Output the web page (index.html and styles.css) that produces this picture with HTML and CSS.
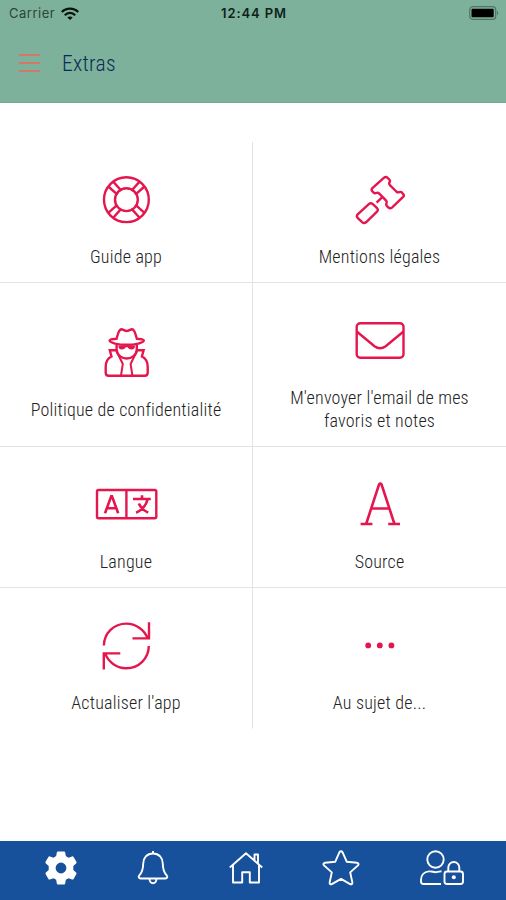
FILE: index.html
```
<!DOCTYPE html>
<html lang="fr">
<head>
    <meta charset="UTF-8">
    <meta name="viewport" content="width=device-width, initial-scale=1.0">
    <title>Extras</title>
    <link rel="stylesheet" href="styles.css">
</head>
<body>
    <header class="header">
        <div class="status-bar">
            <div class="carrier">
                <span>Carrier</span>
                <svg class="wifi" viewBox="0 0 18 13" fill="none" stroke="#07130e" stroke-width="2.3">
                    <path d="M.8 5C5.3.4 12.7.4 17.2 5M3.8 8.2c2.9-3 7.5-3 10.4 0"/>
                    <path d="M6.3 10.6c1.5-1.6 3.9-1.6 5.4 0L9 13z" fill="#07130e" stroke="none"/>
                </svg>
            </div>
            <span class="time">12:44 PM</span>
            <svg class="battery" viewBox="0 0 30 14">
                <rect x=".7" y=".7" width="26" height="12.6" rx="3" fill="none" stroke="#4f7563" stroke-width="1.2"/>
                <rect x="2.5" y="2.8" width="22.2" height="8.4" rx="1" fill="#000"/>
                <path d="M28 4.8c1.6.8 1.6 3.6 0 4.4z" fill="#4f7563"/>
            </svg>
        </div>
        <div class="title-bar">
            <button class="menu-btn" aria-label="Menu">
                <span></span>
                <span></span>
                <span></span>
            </button>
            <h1>Extras</h1>
        </div>
    </header>

    <main class="grid">
        <a class="tile">
            <svg class="icon" viewBox="0 0 64 50">
                <circle cx="32.4" cy="24.7" r="22.4"/>
                <circle cx="32.4" cy="24.7" r="11.4"/>
                <path d="M14.3 11.5l9.2 8.2M19.2 6.6l8.2 9.2M50.5 11.5l-9.2 8.2M45.6 6.6l-8.2 9.2M14.3 37.9l9.2-8.2M19.2 42.8l8.2-9.2M50.5 37.9l-9.2-8.2M45.6 42.8l-8.2-9.2"/>
            </svg>
            <span class="label">Guide app</span>
        </a>
        <a class="tile">
            <svg class="icon" viewBox="0 0 64 50">
                <path d="M35.8 2.8q2-1.7 3.8 0l1.7 1.7q1.2 1.4.2 2.8-.8 1.6.6 3l6.2 6.2q1.4 1.3 3 .6 1.6-.6 2.8.6l1 1.2q1.4 1.5 0 3L44.2 32.3q-2 1.8-3.8.2l-1.2-1.2q-1.5-1.5-.7-3.1.6-1.6-.6-2.8l-6.8-6.9q-1.4-1.2-2.8-.5-1.6.7-2.9-.6l-1.1-1.2q-1.4-1.6.1-3.2z"/>
                <path d="M34 22.4l-5.4 5.3M20.8 29.2q2-1.9 4-.1l4.3 4.1q1.6 1.7-.1 3.5L18.3 47q-2.2 1.9-4.2.1l-4.5-4.3q-1.5-1.7.1-3.4z"/>
            </svg>
            <span class="label">Mentions légales</span>
        </a>
        <a class="tile">
            <svg class="icon" viewBox="0 0 64 50">
                <path d="M22.5 10.8C23.8 7 24.5 1.5 27.3 1.3c2 0 3.3 1.7 5.4 1.7s3.4-1.7 5.4-1.7c2.8.2 3.5 5.7 4.8 9.5 3.3.3 6.900.1 6.900 1.800 0 2.300-8.800 4.200-17.100 4.200S15.600 14.900 15.600 12.600c0-1.700 3.600-1.500 6.900-1.800z"/>
                <path d="M22.6 16.5v5c0 5.5 5.5 9 10.1 9s10.1-3.5 10.1-9v-5"/>
                <path d="M24.5 17.500h16.400c.3 2.700-1 4-3.300 4s-3.400-1-3.900-2.200h-2c-.5 1.200-1.600 2.200-3.900 2.200s-3.600-1.300-3.300-4z" fill="#e5164e" stroke="none"/>
                <path d="M22.3 22.3h-6.500l1.700 6.200c-4.400 2-5.800 6.500-5.800 10.500v5.800q0 3 3 3h36q3 0 3-3V39c0-4-1.400-8.500-5.800-10.500l1.700-6.200h-6.500"/>
                <path d="M22.5 23l6.300 13-1.800 11.500M42.900 23l-6.300 13 1.800 11.500" stroke-width="2"/>
            </svg>
            <span class="label">Politique de confidentialité</span>
        </a>
        <a class="tile">
            <svg class="icon" viewBox="0 0 64 50">
                <rect x="8.7" y="7.2" width="46.8" height="34.6" rx="3.5"/>
                <path d="M8.7 15.5l17.8 14.7q5.6 4 11.2 0l17.8-14.7"/>
            </svg>
            <span class="label">M'envoyer l'email de mes favoris et notes</span>
        </a>
        <a class="tile">
            <svg class="icon" viewBox="0 0 64 50">
                <rect x="3" y="10" width="59.3" height="28.2" rx="1.5"/>
                <path d="M32.4 10v28.2"/>
                <path d="M11 33.3l6.2-17h.8l6.2 17M13.3 28.2h8.6M39 19h17.800M48 15.200V19M53.500 19.500c-1.500 6-5.500 10.500-11.400 13.200M44.800 23.500c1.800 4.200 4.800 7 9.400 9.200" stroke-width="2.6"/>
            </svg>
            <span class="label">Langue</span>
        </a>
        <a class="tile">
            <svg class="icon" viewBox="0 0 64 50">
                <path d="M12.6 44h11.800M40.200 44h11.800M18.300 43.500L31 4.500q1.300-1.800 2.600 0l12.700 39M23.300 28.500h18" stroke-width="2.6"/>
            </svg>
            <span class="label">Source</span>
        </a>
        <a class="tile">
            <svg class="icon" viewBox="0 0 64 50">
                <path d="M9.9 24.5C10 12 20 2.600 32.300 2.600c9.500 0 18 6 21.200 14.500M55 1.200v16.200H38.500M54.800 25c-.1 12.500-10.100 22.200-22.400 22.200-9.500 0-18-6-21.200-14.500M9.800 48.600V32.400h16.500"/>
            </svg>
            <span class="label">Actualiser l'app</span>
        </a>
        <a class="tile">
            <svg class="icon icon-dots" viewBox="0 0 64 50">
                <circle cx="20.2" cy="24.4" r="2.9"/>
                <circle cx="31.8" cy="24.4" r="2.9"/>
                <circle cx="43.4" cy="24.4" r="2.9"/>
            </svg>
            <span class="label">Au sujet de...</span>
        </a>
    </main>

    <nav class="tab-bar">
        <svg class="tab-gear" viewBox="0 0 34 36">
            <path fill-rule="evenodd" d="M14 1.500h6q1 0 1.200 1l.6 3.600 2.700 1.600 3.500-1.300q1-.4 1.600.6l2.800 4.800q.5 1-.3 1.700L29.300 16v4l2.800 2.400q.8.700.3 1.700l-2.800 4.900q-.6.900-1.600.5l-3.500-1.300-2.700 1.600-.6 3.600q-.2 1.100-1.200 1.100h-6q-1 0-1.200-1.100l-.6-3.600-2.700-1.600L6 29.500q-1 .4-1.600-.5l-2.800-4.900q-.5-1 .3-1.700L4.700 20v-4l-2.800-2.500q-.8-.7-.3-1.700L4.400 7Q5 6 6 6.400l3.500 1.300 2.700-1.600.6-3.600q.2-1 1.200-1zM17 12.600a5.400 5.400 0 100 10.800 5.400 5.400 0 000-10.800z"/>
        </svg>
        <svg class="tab-bell" viewBox="0 0 32 36">
            <path d="M16 1v2.500M16 3.500c-6 0-9.800 4.500-9.800 10.200 0 6.300-1.200 8.700-3.900 11.600-1.200 1.400-.5 3.200 1.300 3.200h24.800c1.800 0 2.500-1.800 1.300-3.200-2.700-2.900-3.900-5.300-3.900-11.600C25.800 8 22 3.500 16 3.500zM12.500 29c.2 2.500 1.600 4.200 3.500 4.200s3.300-1.700 3.500-4.200"/>
        </svg>
        <svg class="tab-home" viewBox="0 0 36 36">
            <path d="M1.800 17.500L18 3.200l16.200 14.300M5 15v17.500h9.200V22.200h7.600v10.300H31V15M26.500 10V4.500H30v8.800"/>
        </svg>
        <svg class="tab-star" viewBox="0 0 38 36">
            <path d="M17.500 2.200q1.500-1.900 3 0l4.200 9.500 10.400 1.100q2.400.6.900 2.600l-7.800 7 2.200 10.200q0 2.300-2.300 1.500L19 28.900l-9.100 5.200q-2.300.8-2.300-1.500l2.200-10.200-7.800-7q-1.500-2 .9-2.600l10.400-1.100z"/>
        </svg>
        <svg class="tab-user" viewBox="0 0 46 36">
            <circle cx="16.500" cy="9.500" r="8.200"/>
            <path d="M22.500 21.500c-2.500-.5-4 .7-6 .7-2.200 0-3.700-1.200-6.700-.8-4.800.5-7.800 4-7.800 8.600v1.500q0 2.500 2.500 2.500H22"/>
            <rect x="25.500" y="21.500" width="18.500" height="12.500" rx="2.500"/>
            <path d="M29.300 21v-3.500a5.500 5.500 0 0111 0V21"/>
            <circle class="keyhole" cx="34.800" cy="27.300" r="2"/>
        </svg>
    </nav>
</body>
</html>
```
FILE: styles.css
```
* {
    margin: 0;
    padding: 0;
    box-sizing: border-box;
}

body {
    font-family: 'Roboto Condensed', Roboto, sans-serif;
    font-stretch: 75%;
    background-color: #fff;
    color: #222;
    display: flex;
    flex-direction: column;
    height: 900px;
}

.header {
    height: 103px;
    background-color: #7db19b;
    border-bottom: 1px solid #72aa91;
}

.status-bar {
    display: grid;
    grid-template-columns: 1fr auto 1fr;
    align-items: center;
    height: 26px;
    padding: 0 7px 0 9px;
    font-family: Inter, sans-serif;
    font-stretch: 100%;
    font-size: 13px;
    color: #2c4539;
}

.carrier {
    display: flex;
    align-items: center;
    gap: 6px;
    letter-spacing: 0.5px;
}

.wifi {
    width: 18px;
    height: 13px;
}

.time {
    font-weight: 600;
    letter-spacing: 0.9px;
    color: #10231a;
}

.battery {
    width: 30px;
    height: 14px;
    justify-self: end;
}

.title-bar {
    display: flex;
    align-items: center;
    gap: 22px;
    height: 74px;
    padding-left: 19px;
}

.menu-btn {
    display: flex;
    flex-direction: column;
    justify-content: space-between;
    width: 21px;
    height: 18px;
    border: none;
    background: none;
}

.menu-btn span {
    height: 2px;
    background-color: #cf7966;
}

h1 {
    font-size: 21.5px;
    font-weight: 350;
    letter-spacing: 0.3px;
    color: #0c2c55;
}

.grid {
    display: grid;
    grid-template-columns: 253px 253px;
    grid-template-rows: 141px 164px 141px 141px;
    margin-top: 39px;
}

.tile {
    display: flex;
    flex-direction: column;
    align-items: center;
    justify-content: center;
    padding: 19px 20px 0;
    border-bottom: 1px solid #e3e3e3;
}

.tile:nth-child(odd) {
    border-right: 1px solid #e3e3e3;
}

.tile:nth-last-child(-n + 2) {
    border-bottom-color: transparent;
}

.icon {
    width: 64px;
    height: 50px;
    margin-bottom: 20px;
    fill: none;
    stroke: #e5164e;
    stroke-width: 2.4;
}

.icon-dots {
    fill: #e5164e;
    stroke: none;
}

.label {
    max-width: 200px;
    font-size: 18px;
    font-weight: 350;
    line-height: 23px;
    letter-spacing: 0.2px;
    text-align: center;
}

.tab-bar {
    display: flex;
    align-items: center;
    justify-content: space-between;
    height: 59px;
    margin-top: auto;
    padding: 0 41px 5px 44px;
    background-color: #18519b;
}

.tab-bar svg {
    height: 36px;
    fill: none;
    stroke: #fff;
    stroke-width: 1.9;
    stroke-linejoin: round;
}

.tab-bar .tab-gear {
    width: 34px;
    fill: #fff;
    stroke: none;
}

.tab-bell {
    width: 32px;
}

.tab-home {
    width: 36px;
}

.tab-star {
    width: 38px;
}

.tab-user {
    width: 46px;
}

.keyhole {
    fill: #fff;
    stroke: none;
}
```
